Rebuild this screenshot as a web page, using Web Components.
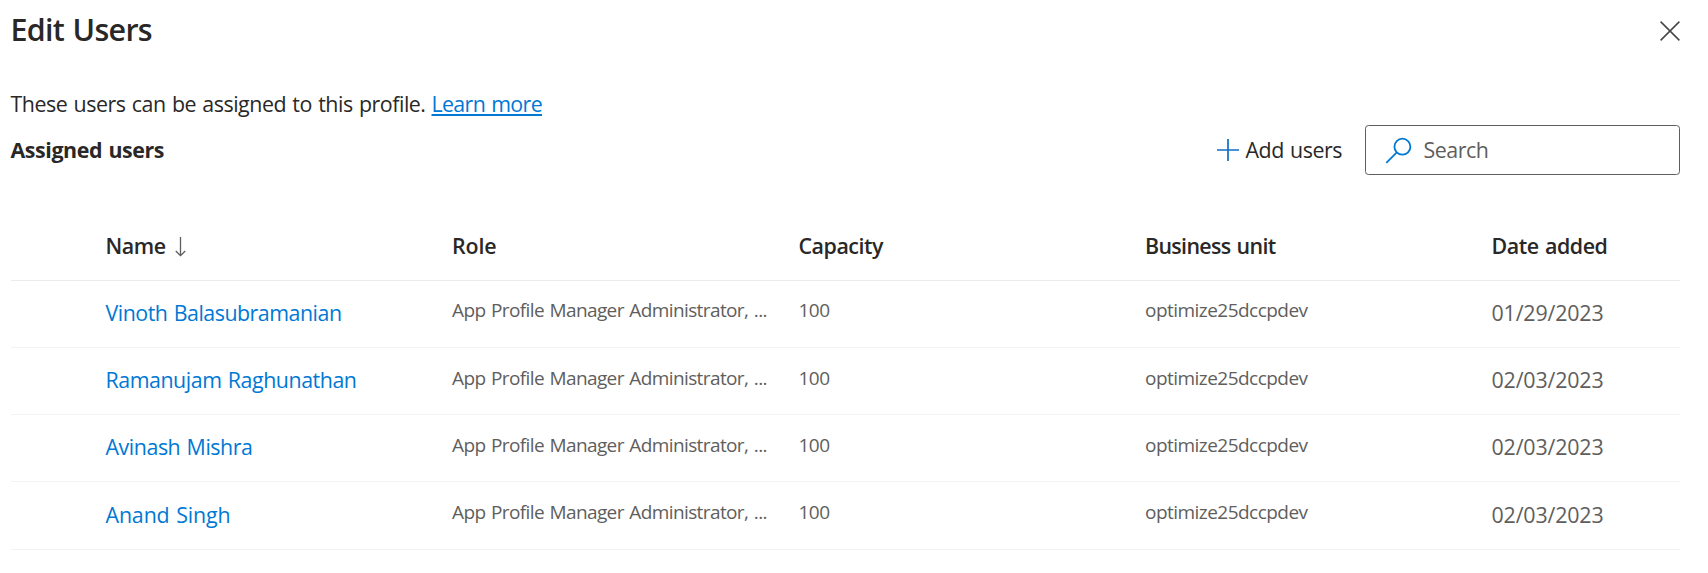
<!DOCTYPE html>
<html lang="en">
<head>
<meta charset="utf-8">
<title>Edit Users</title>
<style>
html,body{margin:0;background:#fff}
body{font-family:"Open Sans","Noto Sans",sans-serif;font-stretch:94%;word-spacing:1.2px;color:#292827}
</style>
</head>
<body>
<edit-users-panel></edit-users-panel>
<script>
function define(name, html, setup) {
  const template = document.createElement('template');
  template.innerHTML = html;
  customElements.define(name, class extends HTMLElement {
    connectedCallback() {
      if (this.shadowRoot) return;
      this.attachShadow({ mode: 'open' }).append(template.content.cloneNode(true));
      if (setup) setup.call(this, this.shadowRoot);
    }
  });
}

/* One line of text, tracked so that it occupies the given measure. */
define('text-line', `
<style>
:host{display:block;white-space:nowrap;font-size:21.4px;line-height:30px;flex:none}
:host([size=title]){font-size:30.4px;line-height:40px;font-weight:600}
:host([size=small]){font-size:19px}
:host([weight=semibold]){font-weight:600}
:host([weight=bold]){font-weight:700}
span{display:inline-block;text-decoration:var(--line-decoration,none);text-underline-offset:2px}
</style><span><slot></slot></span>`, function (root) {
  const measure = Number(this.getAttribute('measure'));
  if (!measure) return;
  const natural = root.querySelector('span').getBoundingClientRect().width;
  const spacing = (measure - natural) / this.textContent.length;
  this.style.letterSpacing = spacing.toFixed(3) + 'px';
});

define('panel-header', `
<style>
:host{display:flex;justify-content:space-between;align-items:flex-start;height:85px;padding-top:10px;box-sizing:border-box}
svg{display:block;margin-top:11px}
</style>
<slot></slot>
<svg width="20" height="20" viewBox="0 0 20 20" fill="none" stroke="#484644" stroke-width="1.5"><path d="M.6.6 19.4 19.4M19.4.6.6 19.4"/></svg>`);

define('text-link', `
<style>
:host{display:block;color:#0078d4}
:host([underlined]){--line-decoration:underline 1.6px}
a{color:inherit;text-decoration:none}
</style><a><slot></slot></a>`);

define('add-button', `
<style>
:host{display:flex;align-items:center;gap:6.5px}
svg{display:block}
</style>
<svg width="22" height="22" viewBox="0 0 22 22" stroke="#0f6fc5" stroke-width="1.7"><path d="M11 0V22M0 11H22"/></svg>
<slot></slot>`);

define('search-box', `
<style>
:host{display:flex;align-items:center;gap:12px;box-sizing:border-box;width:315px;height:50px;padding-left:18.5px;border:1.5px solid #605e5c;border-radius:3.5px;color:#605e5c}
svg{display:block}
</style>
<svg width="27" height="27" viewBox="0 0 27 27" fill="none" stroke="#0078d4" stroke-width="1.8"><circle cx="17.4" cy="9.7" r="8"/><path d="M11.8 15.4 1.3 25.9"/></svg>
<slot></slot>`);

define('tool-bar', `
<style>
:host{display:flex;align-items:center;height:50px}
.gap{flex:1}
search-box{margin-left:23px}
</style>
<text-line weight="bold" measure="153.5">Assigned users</text-line>
<span class="gap"></span>
<add-button><text-line measure="96.5">Add users</text-line></add-button>
<search-box><text-line measure="65">Search</text-line></search-box>`);

define('grid-row', `
<style>
:host{display:grid;grid-template-columns:346.5px 346.5px 346.5px 346.5px 1fr;height:67.25px;box-sizing:border-box;padding-left:95px;border-bottom:1.6px solid #f3f2f1;align-items:start;padding-top:17.2px;color:#605e5c}
:host([head]){height:75.7px;border-bottom-color:#edebe9;color:#292827;padding-top:26px}
</style><slot></slot>`);

define('column-title', `
<style>
:host{display:flex;align-items:flex-start;gap:9.5px}
svg{display:none;margin-top:5.5px}
:host([sorted]) svg{display:block}
</style><slot></slot>
<svg width="11" height="20" viewBox="0 0 11 20" fill="none" stroke="#605e5c" stroke-width="1.3"><path d="M5.5 0V18.5M.8 14 5.5 18.7 10.2 14"/></svg>`);

define('user-grid', `
<style>
:host{display:block;margin-top:30px}
</style>
<grid-row head>
<column-title sorted><text-line weight="semibold" measure="60">Name</text-line></column-title>
<column-title><text-line weight="semibold" measure="44.5">Role</text-line></column-title>
<column-title><text-line weight="semibold" measure="84.5">Capacity</text-line></column-title>
<column-title><text-line weight="semibold" measure="130.5">Business unit</text-line></column-title>
<column-title><text-line weight="semibold" measure="116">Date added</text-line></column-title>
</grid-row>`, function (root) {
  const users = [
    ['Vinoth Balasubramanian', 236, '01/29/2023'],
    ['Ramanujam Raghunathan', 251, '02/03/2023'],
    ['Avinash Mishra', 147, '02/03/2023'],
    ['Anand Singh', 125, '02/03/2023']
  ];
  for (const [name, measure, date] of users) {
    const row = document.createElement('grid-row');
    row.innerHTML =
      `<text-link><text-line measure="${measure}">${name}</text-line></text-link>` +
      `<text-line size="small" measure="315">App Profile Manager Administrator, ...</text-line>` +
      `<text-line size="small" measure="31">100</text-line>` +
      `<text-line size="small" measure="162.5">optimize25dccpdev</text-line>` +
      `<text-line measure="112">${date}</text-line>`;
    for (const line of row.querySelectorAll('[size=small]')) line.style.marginTop = '-2.5px';
    root.append(row);
  }
});

define('edit-users-panel', `
<style>
:host{display:block;height:573px;box-sizing:border-box;padding:0 28px 0 10.5px;overflow:hidden}
.intro{display:flex;height:40px;padding-top:3.6px;box-sizing:border-box}
.intro text-link{margin-left:6px}
</style>
<panel-header><text-line size="title" measure="141.5">Edit Users</text-line></panel-header>
<div class="intro"><text-line measure="415">These users can be assigned to this profile.</text-line><text-link underlined><text-line measure="110.5">Learn more</text-line></text-link></div>
<tool-bar></tool-bar>
<user-grid></user-grid>`);
</script>
</body>
</html>
